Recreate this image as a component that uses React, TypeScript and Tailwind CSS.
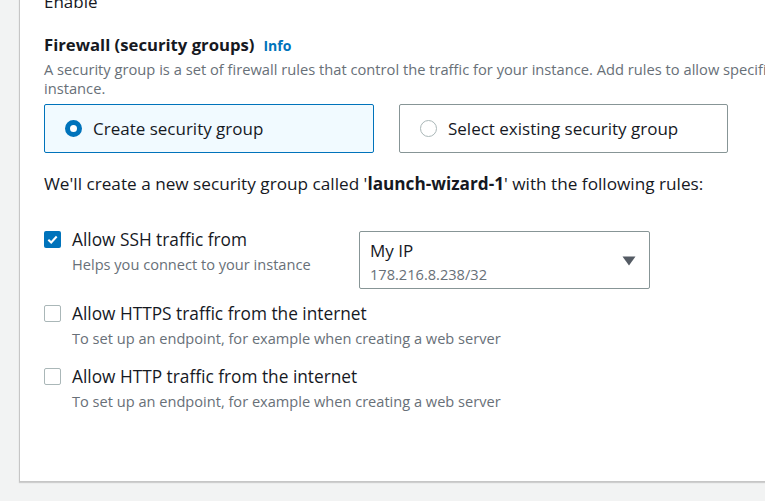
import React from "react";

const font = { fontFamily: '"Open Sans", "Noto Sans", Arial, sans-serif' };

function Checkbox({ checked }: { checked?: boolean }) {
  if (checked) {
    return (
      <div className="w-[17px] h-[17px] rounded-[2px] bg-[#0073bb] flex items-center justify-center shrink-0">
        <svg width="13" height="13" viewBox="0 0 14 14">
          <path d="M2.5 7.2 L5.6 10.2 L11.5 3.8" fill="none" stroke="white" strokeWidth="2.2" />
        </svg>
      </div>
    );
  }
  return <div className="w-[17px] h-[17px] rounded-[2px] border border-[#aab7b8] bg-white shrink-0" />;
}

function CheckRow({ checked, label, sub }: { checked?: boolean; label: string; sub: string }) {
  return (
    <div className="flex gap-[11px]">
      <div className="pt-[2px]">
        <Checkbox checked={checked} />
      </div>
      <div>
        <div className="text-[17.3px] leading-[22px] text-[#16191f] whitespace-nowrap">{label}</div>
        <div className="text-[14.6px] leading-[20px] text-[#687078] mt-[3px] whitespace-nowrap">{sub}</div>
      </div>
    </div>
  );
}

export default function App() {
  return (
    <div className="w-[765px] h-[501px] bg-[#f2f3f3] overflow-hidden" style={font}>
      <div className="ml-[19px] w-[800px] h-[483px] bg-white border-b border-l border-[#c6c6c6] shadow-[0_1px_1px_rgba(0,0,0,0.15)] mt-[-1px] flex flex-col">
        <div className="pl-[24px]">
          <div className="text-[17px] leading-[22px] text-[#16191f] mt-[-8px]">Enable</div>
          <div className="mt-[21px] flex items-baseline gap-[9px]">
            <span className="text-[16.7px] leading-[22px] font-bold text-[#16191f]">Firewall (security groups)</span>
            <span className="text-[14px] font-bold text-[#0073bb]">Info</span>
          </div>
          <div className="text-[14.7px] leading-[19px] text-[#687078] mt-[4px] whitespace-nowrap">
            A security group is a set of firewall rules that control the traffic for your instance. Add rules to allow specific traffic to reach your
            <br />
            instance.
          </div>
          <div className="flex gap-[25px] mt-[6px]">
            <div className="w-[330px] h-[49px] border border-[#0073bb] bg-[#f1faff] rounded-[2px] flex items-center pl-[20px] gap-[11px]">
              <div className="w-[17px] h-[17px] rounded-full border-[5px] border-[#0073bb] bg-white" />
              <span className="text-[17px] text-[#16191f]">Create security group</span>
            </div>
            <div className="w-[329px] h-[49px] border border-[#879596] bg-white rounded-[2px] flex items-center pl-[20px] gap-[11px]">
              <div className="w-[17px] h-[17px] rounded-full border border-[#aab7b8] bg-white" />
              <span className="text-[17px] text-[#16191f]">Select existing security group</span>
            </div>
          </div>
          <div className="text-[17.2px] leading-[22px] text-[#16191f] mt-[20px] whitespace-nowrap">
            We'll create a new security group called '<span className="font-bold">launch-wizard-1</span>' with the following rules:
          </div>
          <div className="mt-[34px] flex">
            <div className="w-[315px]">
              <CheckRow checked label="Allow SSH traffic from" sub="Helps you connect to your instance" />
            </div>
            <div className="mt-[2px] w-[291px] h-[58px] border border-[#879596] rounded-[2px] flex items-start justify-between pl-[10px] pr-[13px] pt-[8px]">
              <div>
                <div className="text-[17px] leading-[22px] text-[#16191f]">My IP</div>
                <div className="text-[14.6px] leading-[20px] text-[#687078] mt-[2px]">178.216.8.238/32</div>
              </div>
              <svg width="14" height="10" viewBox="0 0 14 10" className="mt-[16px]">
                <path d="M0.5 0.5 L13.5 0.5 L7 9.5 Z" fill="#545b64" />
              </svg>
            </div>
          </div>
          <div className="mt-[14px]">
            <CheckRow label="Allow HTTPS traffic from the internet" sub="To set up an endpoint, for example when creating a web server" />
          </div>
          <div className="mt-[18px]">
            <CheckRow label="Allow HTTP traffic from the internet" sub="To set up an endpoint, for example when creating a web server" />
          </div>
        </div>
      </div>
    </div>
  );
}
